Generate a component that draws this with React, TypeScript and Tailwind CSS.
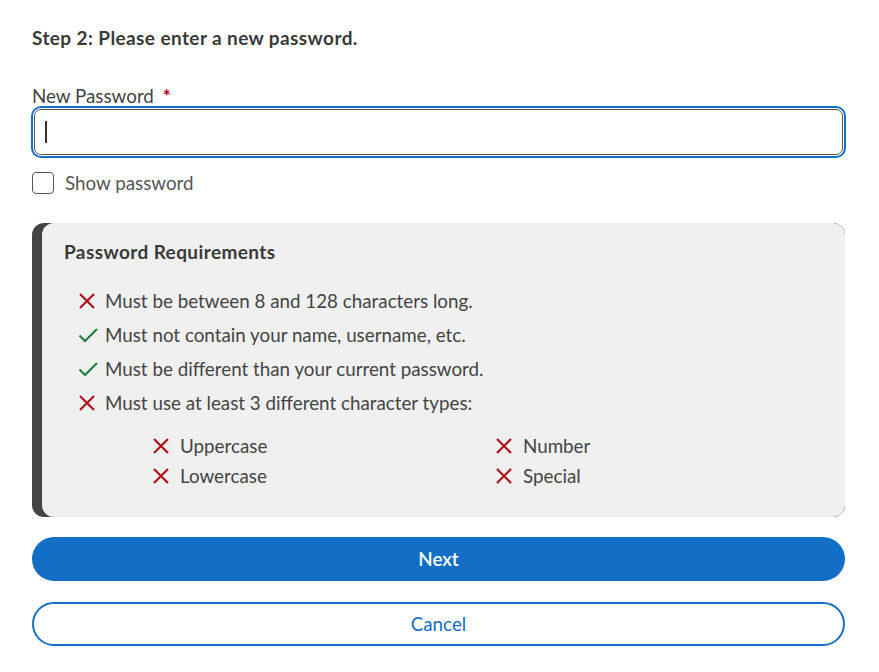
import React from "react";

const XIcon = () => (
  <svg width="18" height="18" viewBox="0 0 18 18" className="shrink-0">
    <path d="M2 2 L16 16 M16 2 L2 16" stroke="#b1101c" strokeWidth="2.2" strokeLinecap="butt" fill="none" />
  </svg>
);

const CheckIcon = () => (
  <svg width="20" height="18" viewBox="0 0 20 18" className="shrink-0">
    <path d="M1.5 9.5 L7 15 L19 3" stroke="#1c7d3e" strokeWidth="2" fill="none" />
  </svg>
);

const Req = ({ ok, children }: { ok: boolean; children: React.ReactNode }) => (
  <li className="flex items-center h-[34px]">
    <span className="w-[28px] flex justify-start pl-[1px]">{ok ? <CheckIcon /> : <XIcon />}</span>
    <span>{children}</span>
  </li>
);

const Sub = ({ children }: { children: React.ReactNode }) => (
  <div className="flex items-center h-[30px]">
    <span className="w-[28px]">
      <XIcon />
    </span>
    <span>{children}</span>
  </div>
);

export default function App() {
  return (
    <div
      className="w-[879px] min-h-[672px] bg-white text-[#3b3b3b] pl-8 pr-[34px] pt-[26px]"
      style={{ fontFamily: "Lato, 'Liberation Sans', sans-serif" }}
    >
      <h2 className="text-[19px] tracking-[0.4px] font-bold leading-[24px] text-[#3a3a3a]">
        Step 2: Please enter a new password.
      </h2>

      <label className="block mt-[34px] text-[18.8px] leading-[24px] text-[#444]">
        New Password <span className="text-[#b00020] ml-1 font-bold">*</span>
      </label>
      <div className="mt-[-2px] -mx-[1px] rounded-[10px] border-[2px] border-[#1470c4] p-[1px]">
        <div className="h-[46px] rounded-[7px] border border-[#555] bg-white flex items-center pl-[10px]">
          <span className="w-[2px] h-[22px] bg-[#333]" />
        </div>
      </div>

      <label className="flex items-center mt-[11px] gap-[11px] text-[18.8px] text-[#555]">
        <span className="w-[22px] h-[22px] rounded-[4px] border border-[#555] bg-white" />
        Show password
      </label>

      <div className="mt-[26px] flex rounded-[12px] bg-[#444] h-[294px] overflow-hidden">
        <div className="w-[10px] shrink-0" />
        <div className="flex-1 bg-[#f0f0f0] rounded-[12px] pl-[22px] pt-[17px]">
          <div className="text-[19px] tracking-[0.4px] font-bold leading-[24px] text-[#3a3a3a]">Password Requirements</div>
          <ul className="mt-[20px] pl-[13px] text-[18.8px] text-[#444]">
            <Req ok={false}>Must be between 8 and 128 characters long.</Req>
            <Req ok={true}>Must not contain your name, username, etc.</Req>
            <Req ok={true}>Must be different than your current password.</Req>
            <Req ok={false}>Must use at least 3 different character types:</Req>
          </ul>
          <div className="mt-[11px] ml-[88px] grid grid-cols-[343px_1fr] text-[18.8px] text-[#444]">
            <Sub>Uppercase</Sub>
            <Sub>Number</Sub>
            <Sub>Lowercase</Sub>
            <Sub>Special</Sub>
          </div>
        </div>
      </div>

      <button className="mt-[20px] w-full h-[44px] rounded-full bg-[#136fc5] text-white text-[18.8px] font-semibold">
        Next
      </button>
      <button className="mt-[21px] w-full h-[44px] rounded-full border-2 border-[#136fc5] text-[#136fc5] text-[18.8px] bg-white">
        Cancel
      </button>
    </div>
  );
}
